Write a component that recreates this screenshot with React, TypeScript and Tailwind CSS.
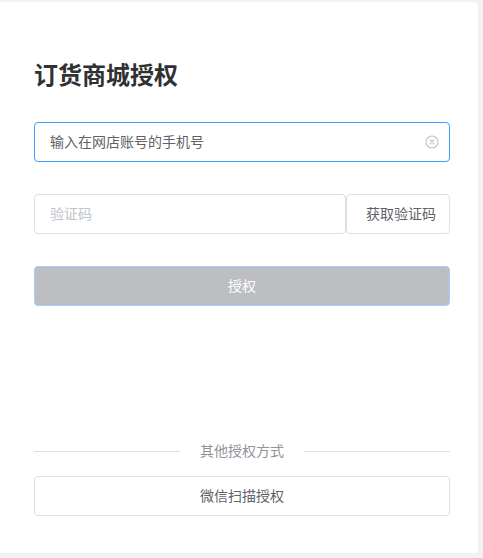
import { FC } from "react";

// 页面字体
const font = `"Noto Sans CJK SC", "Noto Sans", sans-serif`;

// 输入框清除图标
const ClearIcon: FC = () => (
  <svg width="14" height="14" viewBox="0 0 14 14" fill="none" stroke="#c0c4cc" strokeWidth={1.1}>
    <circle cx="7" cy="7" r="6" />
    <path d="M5 5l4 4M9 5l-4 4" strokeLinecap="round" />
  </svg>
);

const App: FC = () => {
  return (
    <div className="w-[483px] h-[558px] bg-[#f2f2f2] pt-[2px] pr-[5px] pb-[5px]" style={{ fontFamily: font }}>
      <div className="h-full bg-white rounded-r-[3px] pl-[34px] pr-[28px] pt-[56px] pb-[37px] flex flex-col">
        {/* 标题 */}
        <h1 className="text-[24px] leading-[32px] font-bold text-[#303133]">订货商城授权</h1>

        {/* 手机号 */}
        <div className="mt-[32px] h-[40px] rounded-[4px] border border-[#409eff] flex items-center pl-[15px] pr-[10px] pb-[2px]">
          <span className="flex-1 text-[14px] text-[#606266]">输入在网店账号的手机号</span>
          <span className="pt-[2px]"><ClearIcon /></span>
        </div>

        {/* 验证码 */}
        <div className="mt-[32px] flex h-[40px]">
          <div className="flex-1 rounded-[4px] border border-[#dcdfe6] flex items-center pl-[15px] pb-[2px] text-[14px] text-[#c0c4cc]">
            验证码
          </div>
          <button className="w-[104px] rounded-[4px] border border-[#dcdfe6] pl-[6px] pb-[2px] text-[14px] text-[#606266] bg-white">
            获取验证码
          </button>
        </div>

        {/* 授权按钮 */}
        <button className="mt-[32px] h-[40px] rounded-[4px] border border-[#a0cfff] bg-[#bcbec2] pb-[2px] text-white text-[14px]">
          授权
        </button>

        {/* 其他方式 */}
        <div className="mt-auto flex items-center h-[20px]">
          <div className="flex-1 h-px bg-[#dcdfe6]" />
          <span className="px-[20px] pb-[2px] text-[14px] text-[#909399]">其他授权方式</span>
          <div className="flex-1 h-px bg-[#dcdfe6]" />
        </div>
        <button className="mt-[15px] h-[40px] rounded-[4px] border border-[#dcdfe6] bg-white pb-[2px] text-[14px] text-[#606266]">
          微信扫描授权
        </button>
      </div>
    </div>
  );
};

export default App;
